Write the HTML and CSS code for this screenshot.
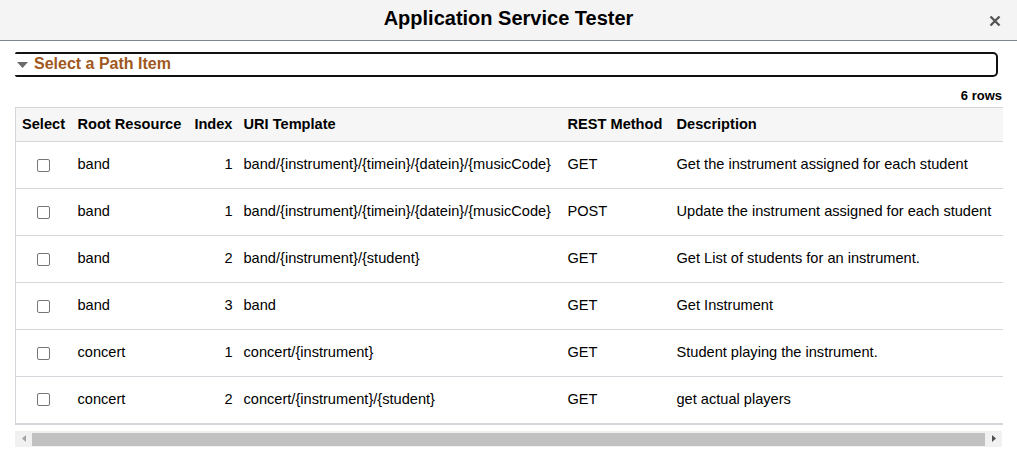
FILE: index.html
```html
<!DOCTYPE html>
<html>
<head>
<meta charset="utf-8">
<link rel="stylesheet" href="styles.css">
</head>
<body>
<div class="header">
  <h1 class="title">Application Service Tester</h1>
  <span class="close"><svg width="12" height="12" viewBox="0 0 12 12"><path d="M1.5 1.5 L10.5 10.5 M10.5 1.5 L1.5 10.5" stroke="#555" stroke-width="2.4" fill="none"/></svg></span>
</div>
<div class="content">
  <div class="section">
    <svg class="caret" width="11" height="6" viewBox="0 0 11 6"><path d="M0 0 H11 L5.5 6 Z" fill="#6b6b6b"/></svg>
    <span class="section-title">Select a Path Item</span>
  </div>
  <div class="rowcount">6 rows</div>
  <table class="grid">
    <colgroup>
      <col class="c-sel"><col class="c-root"><col class="c-idx"><col class="c-uri"><col class="c-meth"><col class="c-desc">
    </colgroup>
    <thead>
      <tr><th>Select</th><th>Root Resource</th><th class="num">Index</th><th>URI Template</th><th>REST Method</th><th>Description</th></tr>
    </thead>
    <tbody>
      <tr><td class="sel"><span class="cb"></span></td><td>band</td><td class="num">1</td><td>band/{instrument}/{timein}/{datein}/{musicCode}</td><td>GET</td><td>Get the instrument assigned for each student</td></tr>
      <tr><td class="sel"><span class="cb"></span></td><td>band</td><td class="num">1</td><td>band/{instrument}/{timein}/{datein}/{musicCode}</td><td>POST</td><td>Update the instrument assigned for each student</td></tr>
      <tr><td class="sel"><span class="cb"></span></td><td>band</td><td class="num">2</td><td>band/{instrument}/{student}</td><td>GET</td><td>Get List of students for an instrument.</td></tr>
      <tr><td class="sel"><span class="cb"></span></td><td>band</td><td class="num">3</td><td>band</td><td>GET</td><td>Get Instrument</td></tr>
      <tr><td class="sel"><span class="cb"></span></td><td>concert</td><td class="num">1</td><td>concert/{instrument}</td><td>GET</td><td>Student playing the instrument.</td></tr>
      <tr><td class="sel"><span class="cb"></span></td><td>concert</td><td class="num">2</td><td>concert/{instrument}/{student}</td><td>GET</td><td>get actual players</td></tr>
    </tbody>
  </table>
  <div class="hscroll">
    <span class="arrow left"><svg width="4" height="7" viewBox="0 0 4 7"><path d="M4 0 V7 L0 3.5 Z" fill="#a3a3a3"/></svg></span>
    <span class="thumb"></span>
    <span class="arrow right"><svg width="4" height="7" viewBox="0 0 4 7"><path d="M0 0 V7 L4 3.5 Z" fill="#505050"/></svg></span>
  </div>
</div>
</body>
</html>
```
FILE: styles.css
```css
* { box-sizing: border-box; }
html, body { margin: 0; padding: 0; background: #fff; }
body { font-family: "Liberation Sans", Arial, sans-serif; color: #000; width: 1017px; height: 469px; overflow: hidden; }

.header {
  height: 41px;
  background: #f4f4f4;
  border-bottom: 1px solid #7d8791;
  display: flex;
  align-items: center;
  justify-content: center;
  position: relative;
}
.title { margin: 0; font-size: 20px; font-weight: bold; line-height: 1; padding-bottom: 4px; }
.close { position: absolute; right: 16px; top: 15px; width: 12px; height: 12px; display: block; }
.close svg { display: block; }

.content { padding: 11px 15px 0 15px; }

.section {
  width: 983px;
  height: 25px;
  border: 2px solid #111;
  border-left: none;
  border-radius: 2px 5px 5px 2px;
  display: flex;
  align-items: center;
  padding-left: 2px;
  padding-bottom: 2px;
}
.caret { display: block; margin-top: 2px; margin-right: 6px; }
.section-title { color: #a0581e; font-weight: bold; font-size: 16px; line-height: 1; }

.rowcount { text-align: right; font-size: 13px; font-weight: bold; height: 30px; line-height: 14px; padding-top: 12px; width: 987px; }

.grid {
  width: 987px;
  table-layout: fixed;
  border-collapse: collapse;
  font-size: 14.6px;
  border-left: 1px solid #d3d7dc;
  border-top: 1px solid #d3d7dc;
  border-bottom: 2px solid #d3d7dc;
}
.c-sel { width: 54px; }
.c-root { width: 115px; }
.c-idx { width: 51px; }
.c-uri { width: 324px; }
.c-meth { width: 109px; }
.c-desc { width: 334px; }

.grid th {
  background: #f6f6f6;
  font-weight: bold;
  text-align: left;
  height: 34px;
  padding: 0 0 2px 8px;
  border-bottom: 1px solid #d3d7dc;
  white-space: nowrap;
}
.grid td {
  height: 47px;
  padding: 0 0 2px 8px;
  border-bottom: 1px solid #d3d7dc;
  white-space: nowrap;
  vertical-align: middle;
}
.grid tbody tr:last-child td { border-bottom: none; }
.grid th.num, .grid td.num { text-align: right; padding-right: 3px; padding-left: 0; }
.grid td.sel { padding-left: 0; text-align: center; }
.grid th:first-child { padding-left: 6px; }
.cb {
  display: inline-block;
  width: 13px;
  height: 13px;
  border: 1px solid #767676;
  border-radius: 2px;
  background: #fff;
  vertical-align: middle;
  margin-left: 1px;
}

.hscroll {
  margin-top: 6px;
  width: 987px;
  height: 16px;
  background: #f1f1f1;
  display: flex;
  align-items: center;
}
.arrow { width: 17px; height: 16px; display: flex; align-items: center; justify-content: center; }
.arrow svg { display: block; }
.thumb { flex: 1; height: 13px; margin-top: 2px; background: #c1c1c1; }
```
